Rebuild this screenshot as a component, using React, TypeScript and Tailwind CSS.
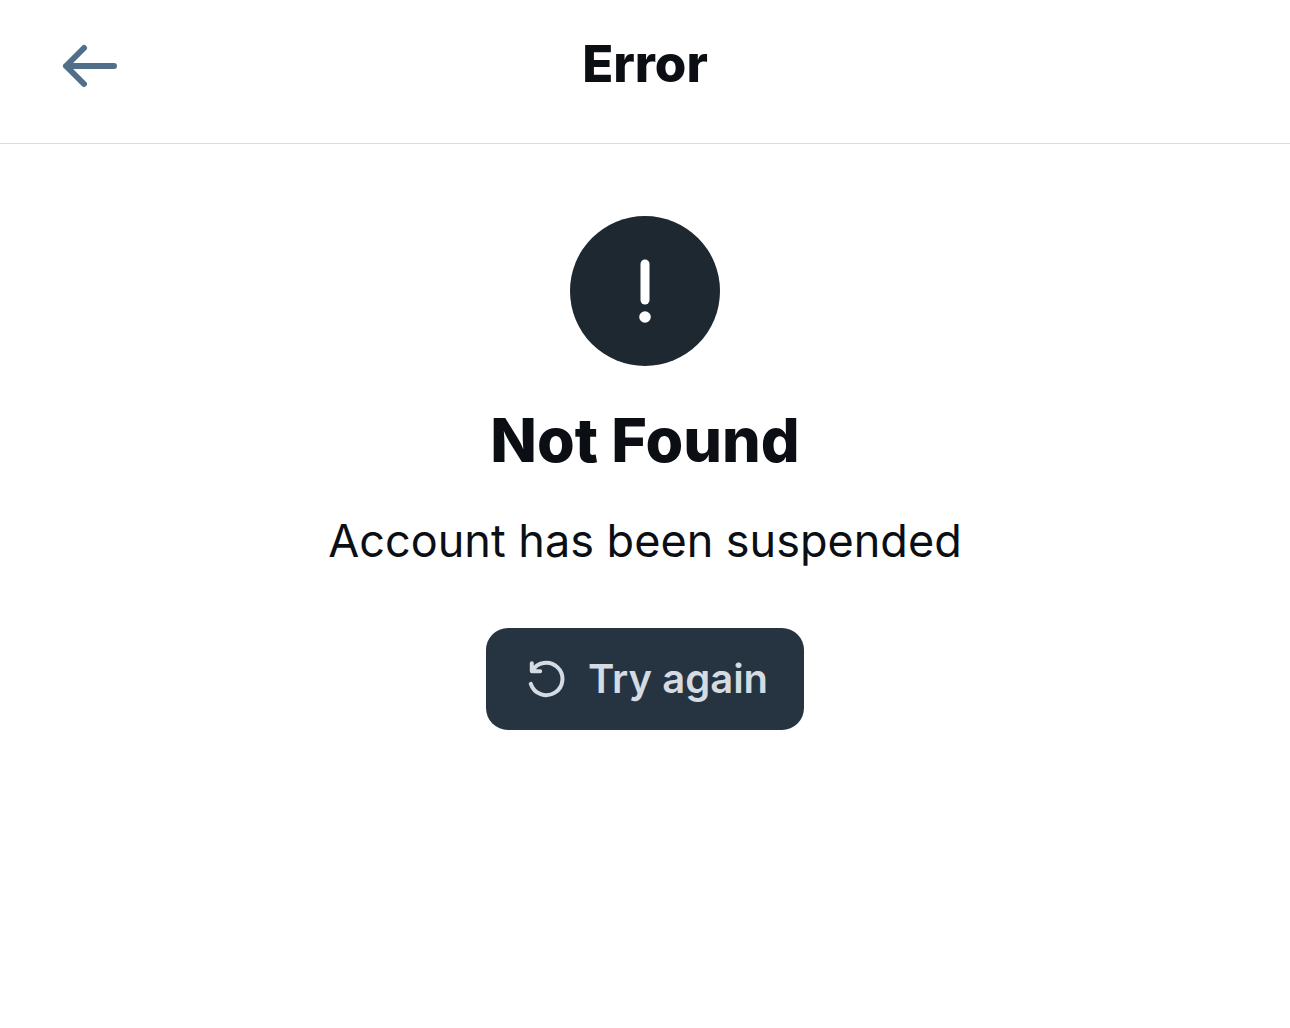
function ArrowLeftIcon() {
  return (
    <svg className="h-12 w-14" viewBox="0 0 56 48" fill="none" stroke="currentColor" strokeWidth="6" strokeLinecap="round" strokeLinejoin="round" aria-hidden="true">
      <path d="M52 24H4M22 6L4 24L22 42" />
    </svg>
  );
}

function ExclamationIcon() {
  return (
    <svg className="h-16 w-4" viewBox="0 0 16 64" fill="none" aria-hidden="true">
      <path d="M8 5V41" stroke="currentColor" strokeWidth="9" strokeLinecap="round" />
      <circle cx="8" cy="58" r="5.8" fill="currentColor" />
    </svg>
  );
}

function RetryIcon() {
  return (
    <svg className="size-10" viewBox="0 0 40 40" fill="none" stroke="currentColor" strokeWidth="4" strokeLinecap="round" strokeLinejoin="round" aria-hidden="true">
      <path d="M5.8 4.2V12.2H14.2M6 12.2A16.2 16.2 0 1 1 4.8 24.8" />
    </svg>
  );
}

export default function App() {
  return (
    <div className="min-h-screen bg-white font-['Inter',sans-serif] text-[#0b0f14]">
      <header className="grid h-36 grid-cols-[1fr_auto_1fr] items-start border-b border-[#d9dbdd] px-[62px] pt-8">
        <button type="button" aria-label="Go back" className="mt-2.5 justify-self-start text-[#526f8a]">
          <ArrowLeftIcon />
        </button>
        <h1 className="text-[51px] leading-16 font-extrabold">Error</h1>
      </header>
      <main className="flex flex-col items-center px-10 pt-18">
        <div className="flex size-[150px] items-center justify-center rounded-full bg-[#1e2830] text-white">
          <ExclamationIcon />
        </div>
        <h2 className="mt-[34px] text-[61px] leading-20 font-extrabold">Not Found</h2>
        <p className="mt-8 text-center text-[45px] leading-[58px]">Account has been suspended</p>
        <button type="button" className="mt-[58px] flex h-[102px] items-center gap-[22px] rounded-[22px] bg-[#263341] pr-9 pl-10 text-[40px] font-semibold text-[#d4dbe2]">
          <RetryIcon />
          Try again
        </button>
      </main>
    </div>
  );
}
